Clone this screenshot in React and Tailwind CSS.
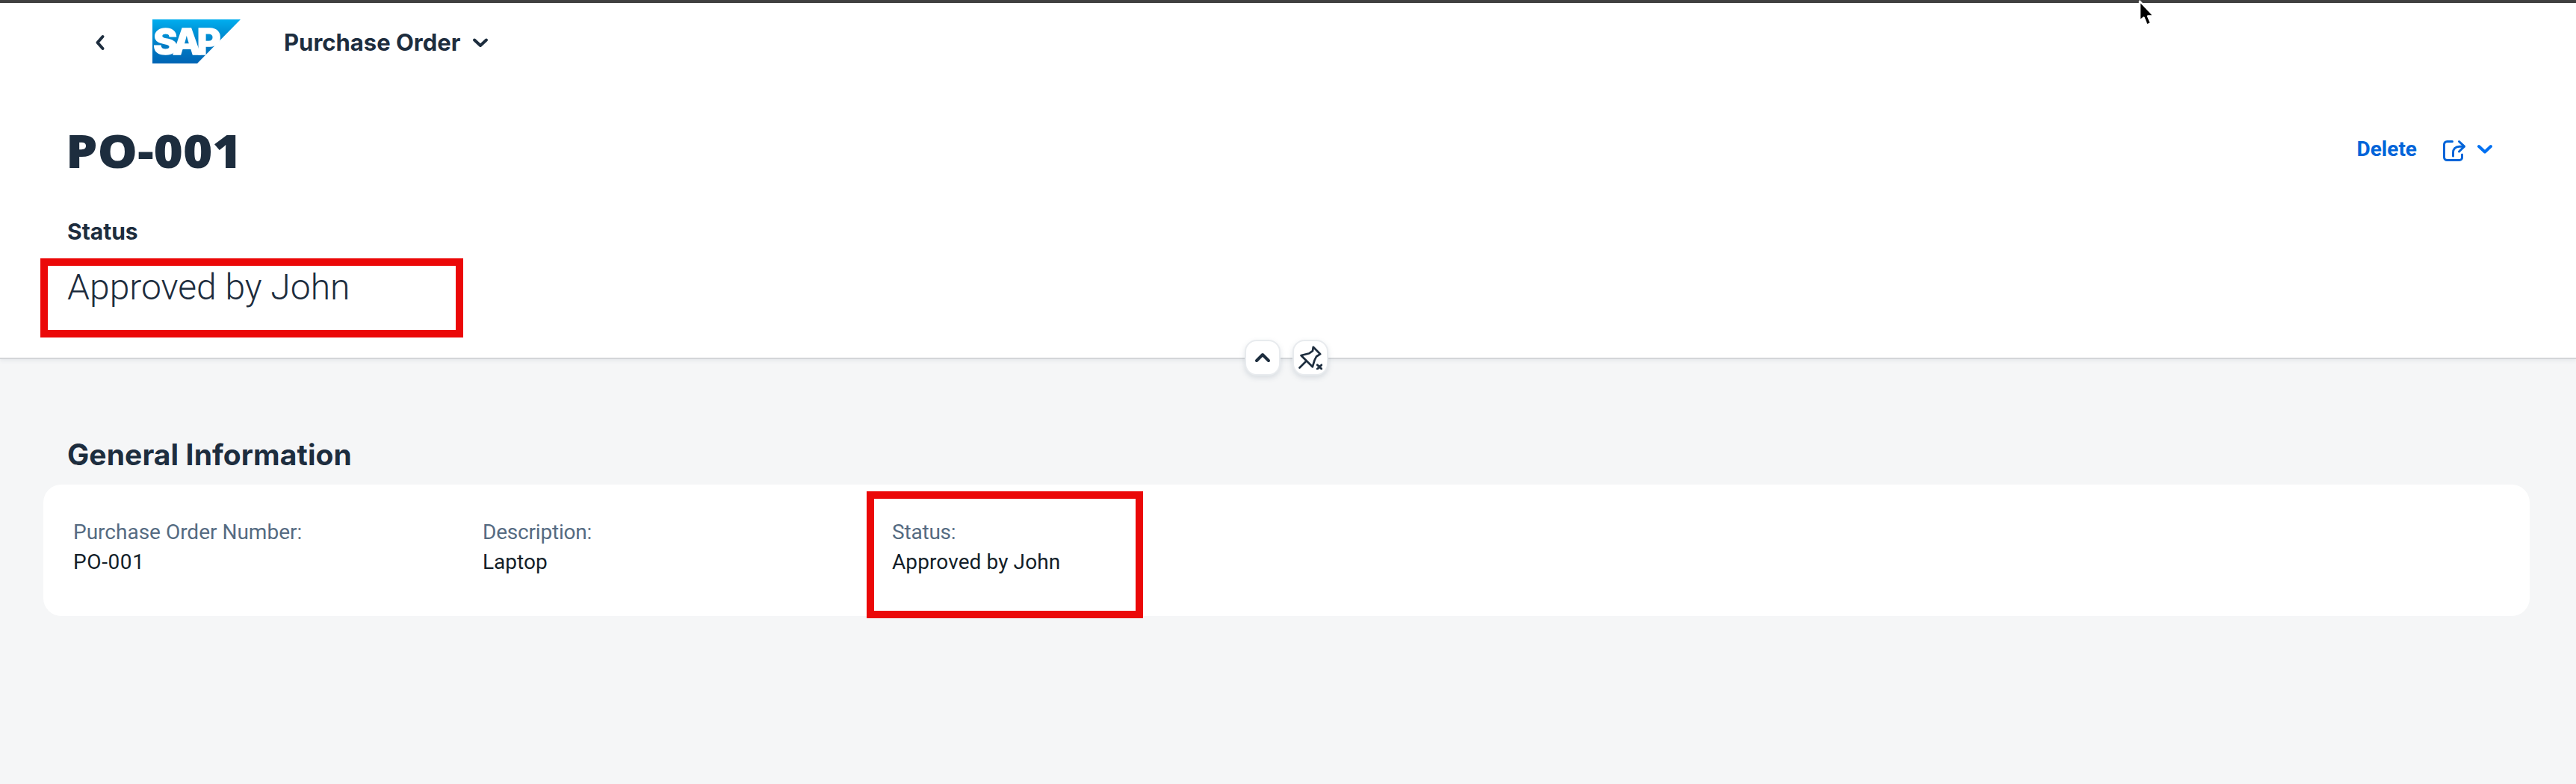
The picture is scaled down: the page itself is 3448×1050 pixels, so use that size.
import React from 'react';

function Chevron({ className, d, box, width = 4 }) {
  return (
    <svg className={className} viewBox={box} fill="none" stroke="currentColor" strokeWidth={width} strokeLinecap="round" strokeLinejoin="round">
      <path d={d} />
    </svg>
  );
}

function SapLogo() {
  return (
    <svg className="h-[59px] w-[118px] overflow-visible" viewBox="0 0 118 59">
      <defs>
        <linearGradient id="sap" x1="0" y1="0" x2="0" y2="1">
          <stop offset="0" stopColor="#00aeef" />
          <stop offset="0.22" stopColor="#0099dc" />
          <stop offset="0.6" stopColor="#007cc5" />
          <stop offset="1" stopColor="#0064b4" />
        </linearGradient>
      </defs>
      <path d="M0 0H118L60 59H0Z" fill="url(#sap)" />
      <text x="1" y="46.500" fontFamily="Inter, sans-serif" fontWeight="800" fontSize="48" letterSpacing="-5.500" fill="#fff" stroke="#fff" strokeWidth="1.400" textLength="85" lengthAdjust="spacingAndGlyphs">SAP</text>
    </svg>
  );
}

function ShareIcon() {
  return (
    <svg className="h-8 w-8" viewBox="0 0 32 32" fill="none" stroke="currentColor" strokeWidth="3" strokeLinecap="round" strokeLinejoin="round">
      <path d="M13.500 3.500H6.500a4 4 0 0 0-4 4V24.500a4 4 0 0 0 4 4H23a3.500 3.500 0 0 0 3.500-3.500V21" />
      <path d="M22.500 3.500L29.500 10.200L22.500 17" />
      <path d="M14.500 23V18.500C14.500 13.500 17.500 10.200 23 10.200H29" />
    </svg>
  );
}

function UnpinIcon() {
  return (
    <svg className="h-8 w-8" viewBox="0 0 32 32" fill="none" stroke="currentColor" strokeWidth="2.700" strokeLinecap="round" strokeLinejoin="round">
      <path d="M19.800 1.800L29.200 11.200L24 14.500L21.500 19.500L18.800 28.300L3.500 13L14.500 10.200L19 7Z" />
      <path d="M10.500 20.500L1.500 29.500" />
      <path d="M25.300 25.800L31 31M31 25.800L25.300 31" strokeWidth="2.900" />
    </svg>
  );
}

const anchor =
  'flex size-12 items-center justify-center rounded-2xl border-2 border-[#e8ebee] bg-white text-[#1d2d3e] shadow-[0_3px_7px_rgba(85,107,130,0.18)]';

const redBox = 'pointer-events-none absolute border-[10px] border-[#eb0808]';

const fields = [
  { label: 'Purchase Order Number:', value: 'PO-001', labelTracking: '', tracking: 'tracking-[0.6px]' },
  { label: 'Description:', value: 'Laptop', labelTracking: 'tracking-[-0.2px]', tracking: '' },
  { label: 'Status:', value: 'Approved by John', labelTracking: 'tracking-[-0.2px]', tracking: 'tracking-[0.1px]', marked: true },
];

export default function App() {
  return (
    <div className="relative h-[1050px] w-[3448px] overflow-hidden bg-[#f5f6f7] font-['Roboto',sans-serif] text-[#1d2d3e]">
      <header className="relative h-[481px] border-b-2 border-[#d3d5d8] bg-white shadow-[0_2px_5px_rgba(85,107,130,0.1)]">
        <div className="h-1 bg-[#404040]" />
        <div className="flex h-[106px] items-center pl-[126px]">
          <Chevron className="h-6 w-4 text-[#1d2d3e]" box="0 0 16 24" d="M11.500 4L4.500 12L11.500 20" />
          <div className="-mt-[3px] ml-[62px]">
            <SapLogo />
          </div>
          <h2 className="ml-[58px] w-[235px] font-['Inter',sans-serif] text-[31px] leading-10 font-bold whitespace-nowrap">Purchase Order</h2>
          <Chevron className="ml-[16px] h-4 w-6" box="0 0 24 16" d="M4 4.500L12 12L20 4.500" />
        </div>

        <div className="mt-[50px] flex h-20 items-center justify-between pr-[110px] pl-[88px]">
          <h1 className="mt-0.5 origin-left scale-x-[1.085] font-['Noto_Sans',sans-serif] text-[62px] leading-[80px] font-black">PO-001</h1>
          <div className="flex items-center text-[#0064d9]">
            <span className="text-[28px] leading-10 font-bold">Delete</span>
            <span className="mt-1 ml-[34px]">
              <ShareIcon />
            </span>
            <Chevron className="ml-[13px] h-4 w-6 text-[#0070f2]" box="0 0 24 16" d="M4 4L12 11.500L20 4" />
          </div>
        </div>

        <div className="mt-[50px] pl-[90px]">
          <h3 className="font-['Inter',sans-serif] text-[30px] leading-10 font-bold">Status</h3>
          <div className="relative mt-[26px] h-14">
            <p className="pt-px text-[48px] leading-[56px] font-light">Approved by John</p>
            <div className={`${redBox} top-[-10px] -left-9 h-[106px] w-[566px]`} />
          </div>
        </div>

        <div className="absolute top-[455px] left-[1666px] flex gap-4">
          <button className={anchor}>
            <Chevron className="h-4 w-6" box="0 0 24 16" d="M4 12L12 4L20 12" />
          </button>
          <button className={anchor}>
            <UnpinIcon />
          </button>
        </div>
      </header>

      <main className="px-[58px] pt-[104px]">
        <div className="flex h-16 items-start pl-8">
          <h2 className="font-['Inter',sans-serif] text-[39px] leading-[48px] font-bold tracking-[0.1px]">General Information</h2>
        </div>
        <section className="flex h-44 w-[3328px] rounded-3xl bg-white pt-11 pl-10">
          {fields.map((f) => (
            <div key={f.label} className="relative w-[548px] text-[28px] leading-10">
              <div className={`text-[#556b82] ${f.labelTracking}`}>{f.label}</div>
              <div className={`text-[#131e29] ${f.tracking}`}>{f.value}</div>
              {f.marked && <div className={`${redBox} top-[-35px] -left-[34px] h-[170px] w-[370px]`} />}
            </div>
          ))}
        </section>
      </main>

      <svg className="absolute top-0 left-[2860px] h-9 w-[26px]" viewBox="0 0 26 36">
        <path d="M4 1.500V28L9.500 23.500L13.500 33.500L19 31L15 21.500H23Z" fill="#000" stroke="#fff" strokeWidth="2.400" strokeLinejoin="round" />
      </svg>
    </div>
  );
}
